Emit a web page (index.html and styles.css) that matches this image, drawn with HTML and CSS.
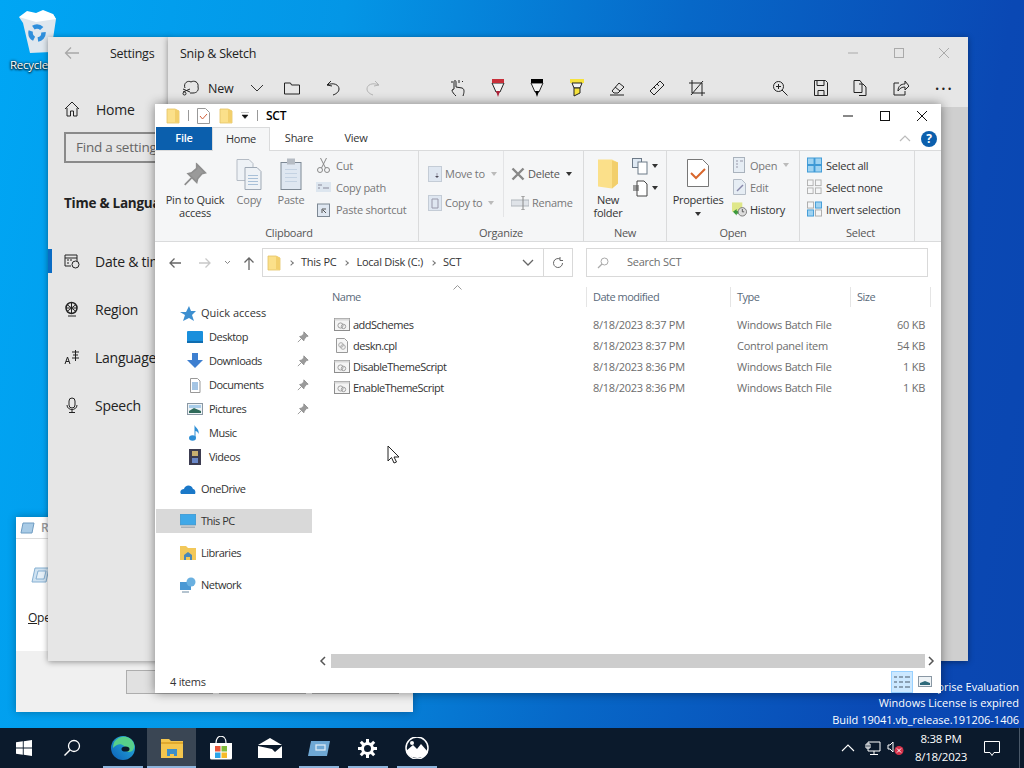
FILE: index.html
```html
<!DOCTYPE html>
<html>
<head>
<title>SCT</title>
<link rel="stylesheet" href="styles.css">
</head>
<body>
<svg class="defs" width="0" height="0">
  <defs>
    <linearGradient id="edgeg" x1="0" y1="1" x2="1" y2="0"><stop offset="0" stop-color="#0b5fb8"/><stop offset="1" stop-color="#2bb6e0"/></linearGradient>
    <symbol id="folder" viewBox="0 0 14 16"><path d="M1 1h8l4 2v12H1z" fill="#fbe08a" stroke="#e5c365" stroke-width=".8"/><path d="M9 1v13l4 1V3z" fill="#f2cf6c"/></symbol>
    <symbol id="script" viewBox="0 0 16 14"><rect x=".5" y=".5" width="15" height="12" fill="#f4f4f4" stroke="#8d8d8d"/><rect x=".5" y=".5" width="15" height="2" fill="#d8d8d8"/><circle cx="6.5" cy="7.5" r="2.6" fill="none" stroke="#a0a0a0"/><circle cx="9.5" cy="8.5" r="2.2" fill="none" stroke="#a0a0a0"/></symbol>
    <symbol id="pin" viewBox="0 0 14 14"><path d="M8 1l5 5-2 .5-2.5 3-.5 2-5-5 2-.5 3-2.500zM5 9l-4 4" fill="#9a9a9a" stroke="#8f8f8f"/></symbol>
    <symbol id="sel" viewBox="0 0 16 16"><g fill="none" stroke="#b0b0b0"><rect x=".5" y=".5" width="6" height="6"/><rect x="9" y=".5" width="6" height="6"/><rect x=".5" y="9" width="6" height="6"/><rect x="9" y="9" width="6" height="6"/></g></symbol>
  </defs>
</svg>

<div class="screen">
  <div class="desktop">
    <div class="bin">
      <svg width="42" height="46" viewBox="0 0 42 46"><path d="M3 9l34-3 3 5-5 33-21 1-7-30z" fill="#dfe7ee"/><path d="M3 9l8-6 9 2 7-3 10 4 3 5-20 3z" fill="#fff"/><circle cx="21" cy="25" r="6.500" fill="none" stroke="#2f8fdc" stroke-width="4.500" stroke-dasharray="9 4"/></svg>
      <span class="bin-label">Recycle Bin</span>
    </div>

    <div class="watermark">
      <div>Windows 10 Enterprise Evaluation</div>
      <div>Windows License is expired</div>
      <div>Build 19041.vb_release.191206-1406</div>
    </div>

    <div class="window run">
      <div class="run-title">
        <svg width="15" height="12" viewBox="0 0 15 12"><path d="M3 1h11l-2 10H1z" fill="#a9cbe6" stroke="#6f9cc2"/></svg>
        <span>Run</span>
      </div>
      <div class="run-body">
        <svg width="20" height="20" viewBox="0 0 20 20"><path d="M5 3h14l-3 14H2z" fill="#cfe2f1" stroke="#86b0d2"/><path d="M8 6h8l-2 8H6z" fill="#e6f0f8" stroke="#86b0d2"/></svg>
        <div class="run-open"><u>O</u>pen:</div>
      </div>
      <div class="run-foot">
        <div class="run-btn"></div>
        <div class="run-btn"></div>
        <div class="run-btn"></div>
      </div>
    </div>

    <div class="window settings">
      <div class="set-head">
        <svg width="16" height="14" viewBox="0 0 16 14"><path d="M15 7H2M7 1.500L1.500 7 7 12.500" fill="none" stroke="#a8a8a8" stroke-width="1.300"/></svg>
        <span>Settings</span>
      </div>
      <div class="set-item home">
        <svg width="16" height="16" viewBox="0 0 16 16"><path d="M1 8l7-7 7 7M3 7v8h3.500v-5h3v5H13V7" fill="none" stroke="#222"/></svg>
        <span>Home</span>
      </div>
      <div class="set-find">Find a setting</div>
      <div class="set-title">Time &amp; Language</div>
      <div class="set-item active">
        <svg width="16" height="16" viewBox="0 0 16 16"><path d="M1 2h12v6M1 2v11h6M1 5h12M3 7h2M6 7h2M3 10h2" fill="none" stroke="#222"/><circle cx="11.500" cy="11.500" r="3.500" fill="#e6e6e6" stroke="#222"/></svg>
        <span>Date &amp; time</span>
      </div>
      <div class="set-item">
        <svg width="16" height="16" viewBox="0 0 16 16"><circle cx="7.500" cy="7" r="5.500" fill="none" stroke="#222" stroke-width="1.500"/><path d="M2 7h11M7.500 1.500v11M3 3.500l9 7M12 3.500l-9 7M4 15h8" fill="none" stroke="#222"/></svg>
        <span>Region</span>
      </div>
      <div class="set-item">
        <svg width="16" height="16" viewBox="0 0 16 16"><path d="M1 15l2.500-7L6 15M2 12.500h3M8 3h7M9 6h5M11.500 1v11M8 9h7" fill="none" stroke="#222"/></svg>
        <span>Language</span>
      </div>
      <div class="set-item">
        <svg width="16" height="16" viewBox="0 0 16 16"><rect x="5" y="1" width="6" height="10" rx="3" fill="none" stroke="#222"/><path d="M3 8c0 6 10 6 10 0M8 13v2M5 15.500h6" fill="none" stroke="#222"/></svg>
        <span>Speech</span>
      </div>
    </div>

    <div class="window snip">
      <div class="snip-head">
        <span>Snip &amp; Sketch</span>
        <div class="snip-ctl">
          <svg width="12" height="12" viewBox="0 0 12 12"><path d="M1 6h10" stroke="#aaa"/></svg>
          <svg width="12" height="12" viewBox="0 0 12 12"><rect x="1.500" y="1.500" width="9" height="9" fill="none" stroke="#aaa"/></svg>
          <svg width="12" height="12" viewBox="0 0 12 12"><path d="M1 1l10 10M11 1L1 11" stroke="#aaa"/></svg>
        </div>
      </div>
      <div class="snip-bar">
        <svg class="tool-new" width="18" height="18" viewBox="0 0 18 18"><path d="M3 9c-2-5 3-8 6-6 3-2 8 0 7 5 1 3-1 6-5 6H8M1 13l7-3M1 10l7 3" fill="none" stroke="#222"/><circle cx="2.500" cy="14.500" r="1.500" fill="none" stroke="#222"/></svg>
        <span class="new-label">New</span>
        <svg class="tool-chev" width="14" height="8" viewBox="0 0 14 8"><path d="M1 1l6 6 6-6" fill="none" stroke="#333"/></svg>
        <svg class="tool-open" width="16" height="14" viewBox="0 0 16 14"><path d="M.5 2h6l1 2h8v9H.5z" fill="none" stroke="#222"/></svg>
        <svg class="tool-undo" width="14" height="16" viewBox="0 0 14 16"><path d="M5 1L1 5l5 1M1 5c7-3 12 0 12 4 0 3-3 5-6 6" fill="none" stroke="#222"/></svg>
        <svg class="tool-redo" width="14" height="16" viewBox="0 0 14 16"><path d="M9 1l4 4-5 1M13 5C6 2 1 5 1 9c0 3 3 5 6 6" fill="none" stroke="#b4b4b4"/></svg>
        <svg class="tool-touch" width="16" height="18" viewBox="0 0 16 18"><path d="M6 17c-2-2-4-4-4-6l2-1V3c0-2 2-2 2 0v5l6 1c3 1 2 5 1 8M1 3h2M9 1v3M13 2l-1 1" fill="none" stroke="#222"/></svg>
        <svg class="tool-pen" width="14" height="18" viewBox="0 0 14 18"><path d="M1 4h12L9 13H5z" fill="#f4f4f4" stroke="#222"/><rect x="1" y="0" width="12" height="4" fill="#c8303a"/><path d="M5 12h4l-2 6z" fill="#b0243a"/></svg>
        <svg class="tool-pen" width="14" height="18" viewBox="0 0 14 18"><path d="M1 4h12L9 13H5z" fill="#f4f4f4" stroke="#222"/><rect x="1" y="0" width="12" height="4" fill="#000"/><path d="M5 12h4l-2 6z" fill="#000"/></svg>
        <svg class="tool-pen" width="16" height="18" viewBox="0 0 16 18"><rect x="1" y="0" width="14" height="4" fill="#f6e23c"/><path d="M3 4h10l-2 5H5z" fill="#f4f4f4" stroke="#222"/><path d="M5 9h6v5l-6 3z" fill="#f6e23c" stroke="#222"/></svg>
        <svg class="tool-sq" width="16" height="16" viewBox="0 0 16 16"><path d="M3 11l7-8 5 4-6 6H5zM1 15h14M6 7l5 4" fill="none" stroke="#222"/></svg>
        <svg class="tool-sq" width="16" height="16" viewBox="0 0 16 16"><path d="M1 11L11 1l4 4L5 15z" fill="none" stroke="#222"/><path d="M5 7l2 2M8 4l2 2" stroke="#222"/></svg>
        <svg class="tool-sq" width="16" height="16" viewBox="0 0 16 16"><path d="M3 0v13h13M0 3h13v13M14 1L2 15" fill="none" stroke="#222"/></svg>
        <svg class="tool-zoom" width="16" height="16" viewBox="0 0 16 16"><circle cx="6.500" cy="6.500" r="5" fill="none" stroke="#222"/><path d="M10 10l5.500 5.500M4 6.500h5M6.500 4v5" fill="none" stroke="#222"/></svg>
        <svg class="tool-right" width="14" height="16" viewBox="0 0 14 16"><path d="M.5.500h11l2 2v13H.5zM3 .5v5h7v-5M4 15.500v-5h6v5" fill="none" stroke="#222"/></svg>
        <svg class="tool-right" width="14" height="16" viewBox="0 0 14 16"><path d="M1 .500h6l2 3v9H1zM6 4h4l3 3v8.500H6" fill="none" stroke="#222"/></svg>
        <svg class="tool-right" width="16" height="16" viewBox="0 0 16 16"><path d="M6 3H1v12h11v-4M5 11c0-5 3-7 7-7V1l4 5-4 4V7c-3 0-5 1-7 4z" fill="none" stroke="#222"/></svg>
        <span class="tool-more">&middot;&middot;&middot;</span>
      </div>
      <div class="snip-canvas"></div>
    </div>

    <div class="window explorer">
      <div class="ex-title">
        <svg class="qa" width="14" height="16"><use href="#folder"/></svg>
        <span class="qa-sep"></span>
        <svg class="qa" width="13" height="16" viewBox="0 0 13 16"><path d="M.5.500h8l4 4v11H.5z" fill="#fff" stroke="#999"/><path d="M3 8l2.500 3L10 6" fill="none" stroke="#d0603a"/></svg>
        <svg class="qa" width="14" height="16"><use href="#folder"/></svg>
        <svg class="qa-drop" width="8" height="7" viewBox="0 0 8 7"><path d="M0 0h8M1 3h6L4 6.500z" fill="#111" stroke="#111" stroke-width=".5"/></svg>
        <span class="qa-sep"></span>
        <span class="ex-name">SCT</span>
        <div class="ex-ctl">
          <svg width="12" height="12" viewBox="0 0 12 12"><path d="M1 6h10" stroke="#111"/></svg>
          <svg width="12" height="12" viewBox="0 0 12 12"><rect x="1.500" y="1.500" width="9" height="9" fill="none" stroke="#111"/></svg>
          <svg width="12" height="12" viewBox="0 0 12 12"><path d="M1 1l10 10M11 1L1 11" stroke="#111"/></svg>
        </div>
      </div>

      <div class="ex-tabs">
        <div class="tab tab-file">File</div>
        <div class="tab tab-home">Home</div>
        <div class="tab tab-share">Share</div>
        <div class="tab tab-view">View</div>
        <svg class="tab-up" width="12" height="7" viewBox="0 0 12 7"><path d="M1 6l5-5 5 5" fill="none" stroke="#bbb" stroke-width="1.200"/></svg>
        <div class="tab-help">?</div>
      </div>

      <div class="ribbon">
        <div class="group g-clip">
          <div class="group-body">
            <div class="big b-pin">
              <svg width="24" height="24" viewBox="0 0 14 14"><use href="#pin"/></svg>
              <span>Pin to Quick access</span>
            </div>
            <div class="big b-copy off">
              <svg width="26" height="32" viewBox="0 0 26 32"><path d="M1 1h12l4 4v17H1z" fill="#eef2f6" stroke="#b5bcc5"/><path d="M9 9h12l4 4v18H9z" fill="#eef2f6" stroke="#9fa9b5"/><path d="M12 17h10M12 20h10M12 23h10M12 26h10" stroke="#a8c0d8"/></svg>
              <span>Copy</span>
            </div>
            <div class="big b-paste off">
              <svg width="22" height="32" viewBox="0 0 22 32"><rect x="1" y="4" width="20" height="27" fill="#dfe7f1" stroke="#7d8894"/><rect x="7" y="0" width="8" height="6" fill="#b6bcc4"/><path d="M5 11h12M5 15h12M5 19h12M5 23h12" stroke="#c4d2e2"/></svg>
              <span>Paste</span>
            </div>
            <div class="small-col">
              <div class="small off"><svg width="14" height="16" viewBox="0 0 14 16"><path d="M4 1l5 10M10 1L5 11" stroke="#888" fill="none"/><circle cx="3.500" cy="13" r="2.500" fill="none" stroke="#888"/><circle cx="10.500" cy="13" r="2.500" fill="none" stroke="#888"/></svg><span>Cut</span></div>
              <div class="small off"><svg width="15" height="10" viewBox="0 0 15 10"><rect width="15" height="10" fill="#dde6ef"/><path d="M2 3h4M2 6h2M7 6h6" stroke="#889"/></svg><span>Copy path</span></div>
              <div class="small off"><svg width="13" height="15" viewBox="0 0 13 15"><rect x=".5" y="2" width="12" height="12.500" fill="#dfe7f1" stroke="#7d8894"/><path d="M5 11V7h4M6 8l3 3" fill="none" stroke="#555"/></svg><span>Paste shortcut</span></div>
            </div>
          </div>
          <div class="group-label">Clipboard</div>
        </div>

        <div class="group g-org">
          <div class="group-body">
            <div class="wide-col col-a">
              <div class="wide off"><svg width="14" height="16" viewBox="0 0 14 16"><rect x=".5" y=".5" width="13" height="15" fill="#dfe7f1" stroke="#c4ccd6"/><path d="M9 7v5M7 10l2 2 2-2" stroke="#99a"/></svg><span>Move to</span><i class="caret light"></i></div>
              <div class="wide off"><svg width="14" height="16" viewBox="0 0 14 16"><rect x=".5" y=".5" width="13" height="15" fill="#dfe7f1" stroke="#c4ccd6"/><path d="M4 4h6v9H4z" fill="none" stroke="#99a"/></svg><span>Copy to</span><i class="caret light"></i></div>
            </div>
            <div class="wide-col col-b">
              <div class="wide dim"><svg width="14" height="14" viewBox="0 0 14 14"><path d="M1.500 1.500l11 11M12.500 1.500l-11 11" stroke="#888" stroke-width="2.400"/></svg><span>Delete</span><i class="caret"></i></div>
              <div class="wide off"><svg width="18" height="14" viewBox="0 0 18 14"><rect y="4" width="18" height="6" fill="#dfe3e8" stroke="#b0b5bc"/><path d="M12 0v14M10 0h4M10 14h4" stroke="#888"/></svg><span>Rename</span></div>
            </div>
          </div>
          <div class="group-label">Organize</div>
        </div>

        <div class="group g-new">
          <div class="group-body">
            <div class="big b-new">
              <svg width="22" height="30" viewBox="0 0 22 30"><path d="M1 0h14l6 3v21l-6 5-14-2z" fill="#fbe08a"/><path d="M15 1l6 2v21l-6 5z" fill="#f2cf6c"/></svg>
              <span>New<br>folder</span>
            </div>
            <div class="new-col">
              <div><svg width="22" height="17" viewBox="0 0 22 17"><rect x=".5" y=".5" width="9" height="9" fill="#dfe9f3" stroke="#6d7a88"/><rect x="6" y="4" width="9" height="12" fill="#fff" stroke="#6d7a88"/></svg><i class="caret"></i></div>
              <div><svg width="22" height="17" viewBox="0 0 22 17"><path d="M5 1h7l3 3v12H5zM1 6h6M1 8h6M1 10h6" fill="#fff" stroke="#444"/></svg><i class="caret"></i></div>
            </div>
          </div>
          <div class="group-label">New</div>
        </div>

        <div class="group g-open">
          <div class="group-body">
            <div class="big b-prop">
              <svg width="22" height="28" viewBox="0 0 22 28"><path d="M.5.500h15l6 6v21H.5z" fill="#fff" stroke="#777"/><path d="M4 14l5 5 9-9" fill="none" stroke="#d8662c" stroke-width="2"/></svg>
              <span>Properties</span>
              <i class="caret"></i>
            </div>
            <div class="small-col">
              <div class="small off"><svg width="13" height="16" viewBox="0 0 13 16"><rect x=".5" y=".5" width="11" height="15" fill="#e6edf4" stroke="#a9b2bc"/><path d="M3 4h2M3 7h2M3 10h2M7 4h3" stroke="#99a"/></svg><span>Open</span><i class="caret light"></i></div>
              <div class="small off"><svg width="13" height="16" viewBox="0 0 13 16"><path d="M.5.500h8l4 4v11H.5z" fill="#e6edf4" stroke="#b4bcc6"/><path d="M4 12l6-6" stroke="#88a" stroke-width="1.500"/></svg><span>Edit</span></div>
              <div class="small"><svg width="16" height="16" viewBox="0 0 16 16"><path d="M0 1h11v10H0z" fill="#dfe78a"/><path d="M1 11l4-3v2h3v3H5v2z" fill="#3c9a3c"/><circle cx="11" cy="11" r="4.500" fill="#ddd" stroke="#777"/><path d="M11 8v3h2" stroke="#555" fill="none"/></svg><span>History</span></div>
            </div>
          </div>
          <div class="group-label">Open</div>
        </div>

        <div class="group g-sel">
          <div class="group-body">
            <div class="small-col">
              <div class="small"><svg width="16" height="16" viewBox="0 0 16 16"><rect width="16" height="16" fill="#3f9ad6"/><path d="M1 1h6v6H1zM9 1h6v6H9zM1 9h6v6H1zM9 9h6v6H9z" fill="#9fd3f2"/></svg><span>Select all</span></div>
              <div class="small"><svg width="16" height="16"><use href="#sel"/></svg><span>Select none</span></div>
              <div class="small"><svg width="16" height="16" viewBox="0 0 16 16"><g stroke="#3f9ad6" fill="#9fd3f2"><rect x="9" y=".5" width="6.500" height="6.500"/><rect x=".5" y="9" width="6.500" height="6.500"/></g><g stroke="#aaa" fill="none"><rect x=".5" y=".5" width="6.500" height="6.500"/><rect x="9" y="9" width="6.500" height="6.500"/></g></svg><span>Invert selection</span></div>
            </div>
          </div>
          <div class="group-label">Select</div>
        </div>
      </div>

      <div class="ex-addr">
        <svg class="nav-back" width="14" height="12" viewBox="0 0 14 12"><path d="M13 6H2M6.500 1.500L2 6l4.500 4.500" fill="none" stroke="#666" stroke-width="1.300"/></svg>
        <svg class="nav-fwd" width="14" height="12" viewBox="0 0 14 12"><path d="M1 6h11M7.500 1.500L12 6l-4.500 4.500" fill="none" stroke="#c8c8c8" stroke-width="1.300"/></svg>
        <svg class="nav-down" width="7" height="5" viewBox="0 0 7 5"><path d="M1 1l2.500 2.500L6 1" fill="none" stroke="#888"/></svg>
        <svg class="nav-up" width="12" height="14" viewBox="0 0 12 14"><path d="M6 14V2M1.500 6.500L6 2l4.500 4.500" fill="none" stroke="#666" stroke-width="1.300"/></svg>
        <div class="addr-box">
          <svg width="14" height="16"><use href="#folder"/></svg>
          <i class="crumb"></i><span>This PC</span>
          <i class="crumb"></i><span>Local Disk (C:)</span>
          <i class="crumb"></i><span>SCT</span>
          <svg class="addr-chev" width="12" height="7" viewBox="0 0 12 7"><path d="M1 1l5 5 5-5" fill="none" stroke="#666" stroke-width="1.300"/></svg>
        </div>
        <div class="addr-refresh">
          <svg width="12" height="12" viewBox="0 0 12 12"><path d="M10.500 6A4.500 4.500 0 1 1 8 2M8 0v3.500h3" fill="none" stroke="#666"/></svg>
        </div>
        <div class="search-box">
          <svg width="12" height="12" viewBox="0 0 12 12"><circle cx="7.500" cy="4.500" r="3.500" fill="none" stroke="#aaa"/><path d="M5 7l-4 4" stroke="#aaa" stroke-width="1.300"/></svg>
          <span>Search SCT</span>
        </div>
      </div>

      <div class="ex-body">
        <div class="navpane">
          <div class="nav-row top quick"><svg width="16" height="15" viewBox="0 0 16 15"><path d="M9 0l2 5h5l-4 4 2 6-5-3-6 3 2-6-5-3h6z" fill="#3d8fd0"/></svg><span>Quick access</span></div>
          <div class="nav-row sub pinned"><svg width="16" height="12" viewBox="0 0 16 12"><rect width="16" height="11" rx="1" fill="#1a8fdc"/><rect y="10" width="16" height="2" fill="#0f6db0"/></svg><span>Desktop</span><svg class="pin" width="12" height="12" viewBox="0 0 14 14"><use href="#pin"/></svg></div>
          <div class="nav-row sub pinned"><svg width="16" height="16" viewBox="0 0 16 16"><path d="M5 0h6v7h5l-8 8-8-8h5z" fill="#3d7fd0"/></svg><span>Downloads</span><svg class="pin" width="12" height="12" viewBox="0 0 14 14"><use href="#pin"/></svg></div>
          <div class="nav-row sub pinned"><svg width="16" height="15" viewBox="0 0 16 15"><path d="M3.500.5h7l2.500 2.500v11.500H3.500z" fill="#fff" stroke="#999"/><path d="M5 5h6M5 7h6M5 9h6M5 11h6" stroke="#4a8ac8"/></svg><span>Documents</span><svg class="pin" width="12" height="12" viewBox="0 0 14 14"><use href="#pin"/></svg></div>
          <div class="nav-row sub pinned"><svg width="16" height="12" viewBox="0 0 16 12"><rect x=".5" y=".5" width="15" height="11" fill="#eef3f6" stroke="#8a98a4"/><path d="M2 8l5-3 7 3v2H2z" fill="#2f6a5a"/><rect x="2" y="2" width="12" height="3" fill="#a9cdea"/></svg><span>Pictures</span><svg class="pin" width="12" height="12" viewBox="0 0 14 14"><use href="#pin"/></svg></div>
          <div class="nav-row sub"><svg width="16" height="16" viewBox="0 0 16 16"><ellipse cx="5.500" cy="13" rx="3.500" ry="2.800" fill="#2f8fd6"/><path d="M7.500 13V0c1 3 5 4 4 9-.5-2-2-3-3-3v7z" fill="#2f8fd6"/></svg><span>Music</span></div>
          <div class="nav-row sub"><svg width="16" height="16" viewBox="0 0 16 16"><rect x="2" y="0" width="12" height="16" fill="#3c3c50"/><rect x="5" y="2" width="6" height="5" fill="#c8b070"/><rect x="5" y="9" width="6" height="5" fill="#6a88c8"/></svg><span>Videos</span></div>
          <div class="nav-row top gap"><svg width="16" height="11" viewBox="0 0 16 11"><path d="M1 10c-2-3 1-5 3-5 1-4 7-5 9 0 2 0 3 3 2 5z" fill="#1a78c8"/></svg><span>OneDrive</span></div>
          <div class="nav-row top gap selected"><svg width="16" height="15" viewBox="0 0 16 15"><rect width="16" height="11" fill="#3fa8e8" stroke="#5a8cb0" stroke-width=".6"/><rect x="1" y="12.500" width="14" height="1.500" fill="#a8b0b8"/></svg><span>This PC</span></div>
          <div class="nav-row top gap"><svg width="16" height="14" viewBox="0 0 16 14"><path d="M0 0h6l2 2h8v12H0z" fill="#f2c85a"/><path d="M4 14V9l4-3 4 3v5h-2v-3H6v3z" fill="#4a88b8"/></svg><span>Libraries</span></div>
          <div class="nav-row top gap"><svg width="16" height="16" viewBox="0 0 16 16"><rect y="5" width="11" height="8" fill="#4a98d4"/><circle cx="11" cy="5" r="4.500" fill="#6ab0e0"/><path d="M2 15h7" stroke="#6a88a0"/></svg><span>Network</span></div>
        </div>

        <div class="listpane">
          <div class="cols head">
            <div>Name<svg class="sort" width="9" height="5" viewBox="0 0 9 5"><path d="M.5 4.500l4-4 4 4" fill="none" stroke="#999"/></svg></div>
            <div>Date modified</div>
            <div>Type</div>
            <div>Size</div>
          </div>
          <div class="rows">
            <div class="cols row">
              <div class="fname"><svg width="16" height="14"><use href="#script"/></svg><span>addSchemes</span></div>
              <div>8/18/2023 8:37 PM</div><div>Windows Batch File</div><div class="num">60 KB</div>
            </div>
            <div class="cols row">
              <div class="fname"><svg width="16" height="15" viewBox="0 0 16 15"><path d="M2.500.5h8l3 3v11h-11z" fill="#f6f6f6" stroke="#999"/><circle cx="7" cy="7" r="2.300" fill="none" stroke="#aaa"/><circle cx="9" cy="9" r="2.300" fill="none" stroke="#aaa"/></svg><span>deskn.cpl</span></div>
              <div>8/18/2023 8:37 PM</div><div>Control panel item</div><div class="num">54 KB</div>
            </div>
            <div class="cols row">
              <div class="fname"><svg width="16" height="14"><use href="#script"/></svg><span>DisableThemeScript</span></div>
              <div>8/18/2023 8:36 PM</div><div>Windows Batch File</div><div class="num">1 KB</div>
            </div>
            <div class="cols row">
              <div class="fname"><svg width="16" height="14"><use href="#script"/></svg><span>EnableThemeScript</span></div>
              <div>8/18/2023 8:36 PM</div><div>Windows Batch File</div><div class="num">1 KB</div>
            </div>
          </div>
          <div class="hscroll">
            <svg width="15" height="14" viewBox="0 0 15 14"><path d="M9 3L5 7l4 4" fill="none" stroke="#555" stroke-width="1.500"/></svg>
            <div class="thumb"></div>
            <svg width="13" height="14" viewBox="0 0 13 14"><path d="M4 3l4 4-4 4" fill="none" stroke="#555" stroke-width="1.500"/></svg>
          </div>
        </div>
      </div>

      <div class="ex-status">
        <span>4 items</span>
        <div class="view-btn on"><svg width="16" height="14" viewBox="0 0 16 14"><path d="M0 2h3M5 2h4M11 2h5M0 7h3M5 7h4M11 7h5M0 12h3M5 12h4M11 12h5" stroke="#8aa0b4" stroke-width="2"/></svg></div>
        <div class="view-btn"><svg width="14" height="11" viewBox="0 0 14 11"><rect x=".5" y=".5" width="13" height="10" fill="#eef3f6" stroke="#8a98a4"/><path d="M2 7l5-2 5 2v2H2z" fill="#2f6a7a"/></svg></div>
      </div>
    </div>

    <svg class="cursor" width="13" height="19" viewBox="0 0 13 19"><path d="M1 1v15l3.500-3.500L7 18l2.500-1-2.500-5h5z" fill="#fff" stroke="#222"/></svg>
  </div>

  <div class="taskbar">
    <div class="tb-btn start"><svg width="16" height="16" viewBox="0 0 16 16"><path d="M0 2.300l6.800-1v6.300H0zM7.700 1.200L16 0v7.600H7.700zM0 8.400h6.800v6.300l-6.800-1zM7.700 8.400H16V16l-8.300-1.200z" fill="#fff"/></svg></div>
    <div class="tb-btn search"><svg width="18" height="18" viewBox="0 0 18 18"><circle cx="11" cy="7" r="5.500" fill="none" stroke="#fff" stroke-width="1.300"/><path d="M7 11l-5.500 5.500" stroke="#fff" stroke-width="1.500"/></svg></div>
    <div class="tb-icons">
      <div class="tb-app run-line"><svg width="24" height="24" viewBox="0 0 24 24"><circle cx="12" cy="12" r="12" fill="url(#edgeg)"/><path d="M4 5C9-1 20-1 23 8c1 4-1 8-5 8-2 0-3-1-3-2 0-4-5-7-9-5-2 1-3 2-4 3 0-3 1-6 2-7z" fill="#57cf8a"/><ellipse cx="14.500" cy="13" rx="4" ry="2.600" fill="#0b1a2c"/></svg></div>
      <div class="tb-app active run-line"><svg width="22" height="19" viewBox="0 0 22 19"><path d="M0 0h8l2 2h12v17H0z" fill="#f4c64e"/><rect y="3" width="22" height="2" fill="#e0a92e"/><rect x="6" y="10" width="10" height="7" fill="#3d8fc8"/><rect x="9" y="15" width="4" height="4" fill="#f4c64e"/></svg></div>
      <div class="tb-app"><svg width="24" height="24" viewBox="0 0 24 24"><path d="M1 7h22v15a1.500 1.500 0 0 1-1.500 1.500h-19A1.500 1.500 0 0 1 1 22z" fill="#fff"/><path d="M7 7c0-9 10-9 10 0" fill="none" stroke="#fff" stroke-width="1.200"/><rect x="6" y="10" width="5.500" height="5.500" fill="#e8553a"/><rect x="12.500" y="10" width="5.500" height="5.500" fill="#7fba3a"/><rect x="6" y="16.500" width="5.500" height="5.500" fill="#2aa4e8"/><rect x="12.500" y="16.500" width="5.500" height="5.500" fill="#f6bb2a"/></svg></div>
      <div class="tb-app"><svg width="24" height="20" viewBox="0 0 24 20"><path d="M0 7l12-7 12 7z" fill="#fff"/><path d="M0 8l14 3 3 3 7-6v12H0z" fill="#fff"/></svg></div>
      <div class="tb-app run-line"><svg width="22" height="15" viewBox="0 0 22 15"><path d="M3 0h19l-3 15H0z" fill="#6fa8d4"/><rect x="8" y="4" width="9" height="5" fill="none" stroke="#dceaf5" stroke-width="1.300"/></svg></div>
      <div class="tb-app run-line"><svg width="19" height="19" viewBox="0 0 19 19"><circle cx="9.500" cy="9.500" r="5" fill="none" stroke="#fff" stroke-width="3"/><path d="M9.500 0v4M9.500 15v4M0 9.500h4M15 9.500h4M2.800 2.800l2.800 2.800M13.400 13.400l2.800 2.800M2.800 16.200l2.800-2.800M13.400 5.600l2.800-2.800" stroke="#fff" stroke-width="3"/></svg></div>
      <div class="tb-app run-line"><svg width="24" height="22" viewBox="0 0 24 22"><circle cx="12" cy="11" r="11" fill="none" stroke="#fff" stroke-width="1.500"/><path d="M1 14l7-6 4 4 4-5 7 8c-3 8-19 8-22-1z" fill="#fff"/><circle cx="7" cy="6" r="2" fill="#fff"/></svg></div>
    </div>
    <div class="tray">
      <svg width="14" height="8" viewBox="0 0 14 8"><path d="M1 7l6-6 6 6" fill="none" stroke="#fff" stroke-width="1.100"/></svg>
      <svg class="tray-net" width="16" height="14" viewBox="0 0 16 14"><path d="M3 1h12v9H3zM9 10v3M5 13.500h8M1 3h4v4H1z" fill="#0b1a2c" stroke="#fff"/></svg>
      <svg class="tray-snd" width="18" height="14" viewBox="0 0 18 14"><path d="M1 4h2l3-3v10L3 8H1z" fill="none" stroke="#fff"/><circle cx="12" cy="9.500" r="4.500" fill="#d6324a"/><path d="M10 7.500l4 4M14 7.500l-4 4" stroke="#fff"/></svg>
      <div class="clock"><div>8:38 PM</div><div>8/18/2023</div></div>
      <svg class="tray-note" width="16" height="15" viewBox="0 0 16 15"><path d="M.5.500h15v11H10l-2 3-2-3H.5z" fill="none" stroke="#fff"/></svg>
      <div class="show-desk"></div>
    </div>
  </div>
</div>
</body>
</html>
```

FILE: styles.css
```css
* {
  box-sizing: border-box;
}
html, body {
  margin: 0;
  padding: 0;
}
body {
  font-family: "Open Sans", sans-serif;
  font-size: 11px;
  letter-spacing: -.25px;
  color: #222;
}
svg {
  display: block;
  flex: none;
}
.defs {
  position: absolute;
}
.screen {
  width: 1024px;
  height: 768px;
  display: flex;
  flex-direction: column;
  overflow: hidden;
}
.desktop {
  flex: 1;
  position: relative;
  overflow: hidden;
  background: linear-gradient(100deg, #00a6f4 0%, #0496e6 30%, #0768c8 60%, #0a48b4 88%, #0a46b0 100%);
}

/* desktop items */
.bin {
  position: absolute;
  left: 10px;
  top: 8px;
  width: 60px;
}
.bin svg {
  margin-left: 6px;
}
.bin-label {
  display: block;
  margin-top: 3px;
  color: #fff;
  font-size: 11.5px;
  white-space: nowrap;
  text-shadow: 0 0 3px #000, 0 1px 2px #000;
}
.watermark {
  position: absolute;
  right: 5px;
  top: 679px;
  text-align: right;
  color: #fff;
  font-size: 11px;
  letter-spacing: 0;
  line-height: 16.4px;
}
.window {
  position: absolute;
}
.cursor {
  position: absolute;
  left: 387px;
  top: 445px;
}

/* run dialog */
.run {
  left: 16px;
  top: 517px;
  width: 397px;
  height: 195px;
  background: #f0f0f0;
  display: flex;
  flex-direction: column;
  box-shadow: 0 0 8px rgba(0, 0, 0, .3);
}
.run-title {
  height: 21px;
  background: #fff;
  display: flex;
  align-items: center;
  padding-left: 4px;
  gap: 6px;
  color: #999;
  font-size: 12px;
  font-weight: 600;
}
.run-body {
  height: 113px;
  background: #fff;
  padding: 26px 0 0 14px;
  border-top: 1px solid #ddd;
}
.run-open {
  margin: 24px 0 0 -2px;
  font-size: 12px;
}
.run-foot {
  padding: 19px 0 0 110px;
  display: flex;
  gap: 6px;
}
.run-btn {
  width: 87px;
  height: 24px;
  border: 1px solid #adadad;
  background: #e1e1e1;
}

/* settings */
.settings {
  left: 48px;
  top: 37px;
  width: 121px;
  height: 624px;
  background: #e6e6e6;
  overflow: hidden;
  font-size: 14px;
  white-space: nowrap;
  box-shadow: 0 1px 6px rgba(0, 0, 0, .4);
}
.set-head {
  height: 32px;
  display: flex;
  align-items: center;
  padding-left: 16px;
  font-size: 12.500px;
}
.set-head span {
  margin-left: 30px;
}
.set-item {
  height: 48px;
  display: flex;
  align-items: center;
  padding-left: 16px;
  gap: 15px;
}
.set-item.home {
  margin-top: 16px;
  gap: 16px;
}
.set-find {
  margin: -1px 0 0 16px;
  width: 140px;
  height: 31px;
  border: 2px solid #8a8a8a;
  padding: 4px 10px;
  color: #666;
  font-size: 13.500px;
}
.set-title {
  margin: 30px 0 24px 16px;
  font-size: 13.500px;
  font-weight: 700;
  line-height: 20px;
}
.set-item.active {
  position: relative;
}
.set-item.active::before {
  content: "";
  position: absolute;
  left: 0;
  top: 12px;
  width: 4px;
  height: 24px;
  background: #0a6cc4;
}

/* snip and sketch */
.snip {
  left: 168px;
  top: 37px;
  width: 800px;
  height: 624px;
  background: #e6e6e6;
  display: flex;
  flex-direction: column;
  box-shadow: 0 1px 6px rgba(0, 0, 0, .4);
}
.snip-head {
  height: 32px;
  display: flex;
  align-items: center;
  padding-left: 12px;
  font-size: 12.500px;
}
.snip-ctl {
  margin-left: auto;
  margin-right: 18px;
  display: flex;
  gap: 33.500px;
}
.snip-bar {
  height: 38px;
  display: flex;
  align-items: center;
}
.tool-new {
  margin-left: 14px;
}
.new-label {
  margin-left: 8px;
  width: 26px;
  font-size: 12.500px;
}
.tool-chev {
  margin-left: 16px;
}
.tool-open {
  margin-left: 20px;
}
.tool-undo {
  margin-left: 26px;
}
.tool-redo {
  margin-left: 26px;
}
.tool-touch {
  margin-left: 70px;
}
.tool-pen {
  margin-left: 25px;
}
.tool-sq {
  margin-left: 24px;
}
.tool-zoom {
  margin-left: 67px;
}
.tool-right {
  margin-left: 25.500px;
}
.tool-more {
  margin-left: 26px;
  font-size: 20px;
  letter-spacing: 1px;
}
.snip-canvas {
  flex: 1;
  background: #cfcfcf;
}

/* file explorer */
.explorer {
  left: 155px;
  top: 104px;
  width: 786px;
  height: 589px;
  background: #fff;
  display: flex;
  flex-direction: column;
  box-shadow: 0 0 10px rgba(0, 0, 0, .45);
}
.ex-title {
  height: 23px;
  display: flex;
  align-items: center;
  padding-left: 11px;
}
.qa-sep {
  width: 1px;
  height: 11px;
  background: #999;
  margin: 0 8px;
}
.qa + .qa {
  margin-left: 9px;
}
.qa-drop {
  margin-left: 8px;
}
.ex-name {
  font-size: 12px;
  font-weight: 600;
  color: #000;
}
.ex-ctl {
  margin-left: auto;
  margin-right: 13px;
  display: flex;
  gap: 25px;
}
.ex-tabs {
  height: 23px;
  display: flex;
  align-items: center;
  padding-left: 1px;
}
.tab {
  height: 23px;
  line-height: 22px;
  text-align: center;
  color: #333;
}
.tab-file {
  width: 56px;
  background: #0b5fad;
  color: #fff;
  font-weight: 600;
}
.tab-home {
  width: 58px;
  height: 24px;
  background: #f5f6f7;
  border: 1px solid #dadbdc;
  border-bottom: 0;
  align-self: flex-start;
  position: relative;
}
.tab-share {
  width: 58px;
}
.tab-view {
  width: 56px;
}
.tab-up {
  margin-left: auto;
}
.tab-help {
  margin: 0 4px 0 10px;
  width: 16px;
  height: 16px;
  border-radius: 50%;
  background: #0b5fad;
  color: #fff;
  font-size: 12px;
  font-weight: 700;
  line-height: 16px;
  text-align: center;
}
.ribbon {
  height: 92px;
  display: flex;
  padding-left: 1px;
  background: #f5f6f7;
  border-top: 1px solid #dadbdc;
  border-bottom: 1px solid #dadbdc;
}
.group {
  height: 90px;
  display: flex;
  flex-direction: column;
  border-right: 1px solid #dadbdc;
}
.g-clip {
  width: 263px;
  padding-left: 4px;
}
.g-org {
  width: 165px;
}
.g-new {
  width: 83px;
}
.g-open {
  width: 133px;
}
.g-sel {
  width: 115px;
  padding-left: 7px;
}
.group-body {
  flex: 1;
  display: flex;
  min-height: 0;
}
.group-label {
  height: 16px;
  line-height: 15px;
  text-align: center;
  color: #555;
}
.big {
  display: flex;
  flex-direction: column;
  align-items: center;
  padding-top: 7px;
  line-height: 13px;
  text-align: center;
  color: #333;
}
.big svg {
  height: 33px;
  margin-bottom: 2px;
}
.off,
.off span {
  color: #777;
}
.dim {
  color: #555;
}
.b-pin {
  width: 70px;
}
.b-copy,
.b-paste {
  width: 38px;
  margin-left: 4px;
}
.b-copy {
  margin-left: 0;
}
.small-col {
  display: flex;
  flex-direction: column;
  padding-top: 3px;
  margin-left: 6px;
}
.small {
  height: 22px;
  display: flex;
  align-items: center;
  gap: 5px;
  white-space: nowrap;
  color: #333;
}
.small.off {
  color: #777;
}
.small svg {
  width: 15px;
}
.wide-col {
  padding-top: 8px;
}
.col-a {
  width: 85px;
  height: 66px;
  padding-left: 9px;
  border-right: 1px solid #e3e4e6;
}
.col-b {
  padding-left: 7px;
}
.wide {
  height: 29px;
  display: flex;
  align-items: center;
  gap: 3px;
  white-space: nowrap;
}
.caret {
  display: inline-block;
  width: 0;
  height: 0;
  border: 3px solid transparent;
  border-top: 4px solid #333;
  border-bottom: 0;
  margin-left: 3px;
}
.caret.light {
  border-top-color: #bbb;
}
.b-new {
  width: 48px;
}
.new-col {
  padding-top: 4px;
}
.new-col div {
  height: 22px;
  display: flex;
  align-items: center;
}
.new-col .caret {
  margin-left: -2px;
}
.b-prop {
  width: 62px;
}
.b-prop svg {
  height: 30px;
  margin-bottom: 5px;
}
.b-prop .caret {
  margin: 6px 0 0;
}
.g-open .small-col {
  margin-left: 3px;
}
.g-open .small {
  gap: 3px;
}
.g-sel .small-col {
  margin-left: 0;
}
.g-sel .small {
  gap: 4px;
}
.ex-addr {
  height: 42px;
  display: flex;
  align-items: center;
  padding-bottom: 1px;
}
.nav-back {
  margin-left: 13px;
}
.nav-fwd {
  margin-left: 16px;
}
.nav-down {
  margin-left: 12px;
}
.nav-up {
  margin-left: 12px;
}
.addr-box,
.addr-refresh,
.search-box {
  height: 29px;
  border: 1px solid #d9d9d9;
  display: flex;
  align-items: center;
}
.addr-box span,
.search-box span {
  margin-top: -2px;
}
.addr-box {
  margin-left: 7px;
  width: 282px;
  padding-left: 4px;
  color: #333;
}
.crumb {
  width: 4px;
  height: 4px;
  border-top: 1px solid #777;
  border-right: 1px solid #777;
  transform: rotate(45deg);
  margin: 0 8px 0 8px;
}
.addr-chev {
  margin-left: auto;
  margin-right: 9px;
}
.addr-refresh {
  width: 29px;
  border-left: 0;
  justify-content: center;
}
.search-box {
  margin-left: 13px;
  width: 342px;
  padding-left: 10px;
  gap: 18px;
  color: #6d6d6d;
}
.ex-body {
  flex: 1;
  display: flex;
  min-height: 0;
}
.navpane {
  width: 157px;
  padding: 17px 0 0 1px;
  flex: none;
}
.nav-row {
  height: 24px;
  display: flex;
  align-items: center;
  color: #333;
  letter-spacing: -.5px;
}
.nav-row span {
  margin-top: -2px;
}
.nav-row.quick {
  letter-spacing: 0;
}
.nav-row.top {
  padding-left: 24px;
  gap: 5px;
}
.nav-row.sub {
  padding-left: 31px;
  gap: 6px;
}
.nav-row.gap {
  margin-top: 8px;
}
.nav-row.selected {
  background: #d9d9d9;
}
.nav-row .pin {
  margin-left: auto;
  margin-right: 3px;
}
.listpane {
  flex: 1;
  display: flex;
  flex-direction: column;
  min-width: 0;
}
.cols {
  display: grid;
  grid-template-columns: 275px 144px 120px 80px;
}
.cols > div {
  padding-left: 6px;
}
.head {
  height: 20px;
  margin-top: 3px;
  color: #5a6a7a;
  line-height: 20px;
  letter-spacing: -.5px;
}
.head > div {
  border-right: 1px solid #e5e5e5;
}
.head > div:first-child {
  padding-left: 20px;
  position: relative;
}
.sort {
  position: absolute;
  left: 141px;
  top: -2px;
}
.rows {
  flex: 1;
  padding-top: 7px;
}
.row {
  height: 21px;
  line-height: 21px;
  color: #6d6d6d;
}
.row .fname {
  padding-left: 22px;
  display: flex;
  align-items: center;
  gap: 3px;
  color: #333;
  letter-spacing: -.5px;
}
.row .num {
  text-align: right;
  padding-right: 6px;
}
.hscroll {
  height: 14px;
  margin: 0 3px 2px 4px;
  display: flex;
}
.thumb {
  flex: 1;
  background: #cdcdcd;
}
.ex-status {
  height: 23px;
  display: flex;
  align-items: center;
  padding-left: 15px;
  color: #333;
}
.view-btn {
  width: 22px;
  height: 22px;
  display: flex;
  align-items: center;
  justify-content: center;
}
.view-btn.on {
  margin-left: auto;
  background: #cce8ff;
  border: 1px solid #99d1ff;
}
.view-btn:last-child {
  margin: 0 5px 0 1px;
}

/* taskbar */
.taskbar {
  height: 40px;
  flex: none;
  display: flex;
  background: #0b1a2c;
  color: #fff;
}
.tb-btn {
  width: 48px;
  display: flex;
  align-items: center;
  justify-content: center;
}
.tb-icons {
  margin-left: 2px;
  display: flex;
}
.tb-app {
  width: 49px;
  display: flex;
  align-items: center;
  justify-content: center;
  position: relative;
}
.tb-app.active {
  background: #3a4654;
}
.run-line::after {
  content: "";
  position: absolute;
  left: 5px;
  right: 4px;
  bottom: 0;
  height: 2px;
  background: #8db4dc;
}
.tb-app.active::after {
  left: 0;
  right: 0;
}
.tray {
  margin-left: auto;
  display: flex;
  align-items: center;
  padding-right: 4px;
}
.tray-net {
  margin-left: 10px;
}
.tray-snd {
  margin-left: 6px;
}
.clock {
  margin-left: 1px;
  width: 70px;
  text-align: center;
  font-size: 11.500px;
  line-height: 18px;
}
.tray-note {
  margin-left: 8px;
}
.show-desk {
  width: 1px;
  height: 40px;
  margin-left: 19px;
  background: #4a5868;
}
```
